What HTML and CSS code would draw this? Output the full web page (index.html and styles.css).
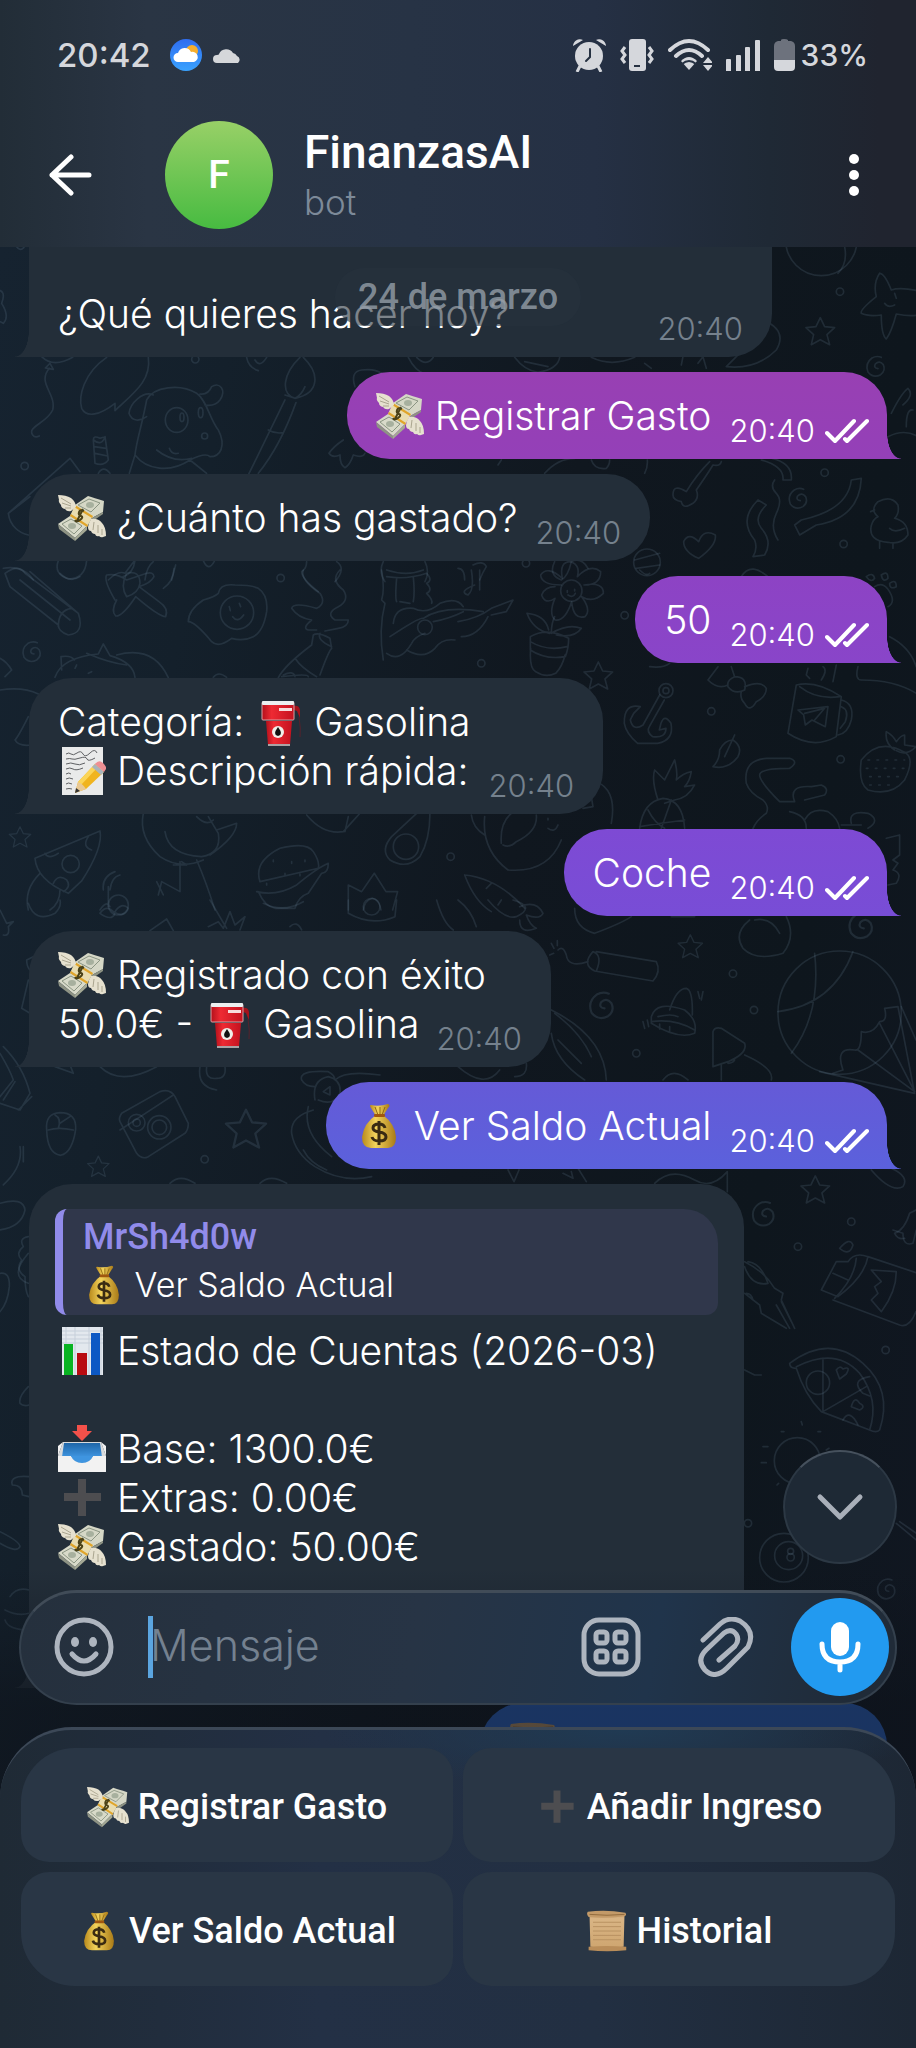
FILE: index.html
```html
<!DOCTYPE html>
<html lang="es">
<head>
<meta charset="utf-8">
<meta name="viewport" content="width=device-width, initial-scale=1">
<title>FinanzasAI</title>
<link rel="stylesheet" href="styles.css">
</head>
<body>
<svg class="defs" aria-hidden="true">
  <defs>
    <linearGradient id="gold" x1="0" x2="1" y1="0" y2="0"><stop offset="0" stop-color="#b98a1c"/><stop offset=".4" stop-color="#f3d35c"/><stop offset="1" stop-color="#a97a17"/></linearGradient>
    <linearGradient id="red" x1="0" x2="1" y1="0" y2="0"><stop offset="0" stop-color="#b3101b"/><stop offset=".3" stop-color="#ee2a33"/><stop offset="1" stop-color="#c4121f"/></linearGradient>
    <linearGradient id="paper" x1="0" x2="0" y1="0" y2="1"><stop offset="0" stop-color="#c9a173"/><stop offset=".15" stop-color="#d9b585"/><stop offset="1" stop-color="#cfa670"/></linearGradient>
    <linearGradient id="sky" x1="0" x2="0" y1="0" y2="1"><stop offset="0" stop-color="#2f6df0"/><stop offset="1" stop-color="#39a2ff"/></linearGradient>
    <linearGradient id="tray" x1="0" x2="0" y1="0" y2="1"><stop offset="0" stop-color="#1f66a8"/><stop offset="1" stop-color="#3f95e0"/></linearGradient>
    <symbol id="e-wings" viewBox="0 0 48 48">
      <path d="M17 11 30 2q6 2 16 5l-1 11-11 6z" fill="#d5d7c6"/><path d="M45 18l-11 6 1 3 10-7z" fill="#8e9384"/>
      <path d="M20 11 31 5l11 4-9 9z" fill="none" stroke="#8b9583" stroke-width="1"/><ellipse cx="32" cy="11" rx="4" ry="3" fill="#a7b09e"/>
      <path d="M0 30 12 22l17 10-12 12z" fill="#d8dac9"/><path d="M0 30l17 14v3L1 35z" fill="#8e9384"/><path d="M17 44 29 32v4L17 47z" fill="#a5a995"/>
      <path d="M4 30l9-5 11 7-8 8z" fill="none" stroke="#8b9583" stroke-width="1"/><ellipse cx="14" cy="32" rx="4" ry="3" fill="#a7b09e"/>
      <path d="M17 11 35 22 29 33 12 22z" fill="#e9ddb0"/><path d="M17 11 35 22l-1 2-18-11zM13 20l17 11-1 2-17-11z" fill="#e0a52b"/>
      <path d="M26 17q-4-2-5 1t2 4-1 4-5 0M25 15l-6 12" fill="none" stroke="#4b4218" stroke-width="2"/>
      <path d="M0 1q8 0 13 3 5 4 5 9l-5 4q-4 1-6-2-4-1-4-4-3-3-2-5z" fill="#e6e1cf"/><path d="M3 4l10 6M4 9l9 3M7 14l6 0" stroke="#aaa58f" stroke-width="1" fill="none"/>
      <path d="M33 25q7-1 11 4 4 4 4 13l-3 1q-2 1-4-1-3 1-4-2-3 0-4-3-3 0-3-4 1-5 3-8z" fill="#e6e1cf"/><path d="M36 28l-1 8M40 31v8M44 35v6" stroke="#aaa58f" stroke-width="1" fill="none"/>
    </symbol>
    <symbol id="e-bag" viewBox="0 0 48 48">
      <path d="M16 3q8 2 17-1 3 1 0 4l-5 8h-7l-5-8q-2-3 0-3z" fill="url(#gold)"/><path d="M20 5l3 8M25 5v8M30 5l-3 8" stroke="#8f6a12" stroke-width="1" fill="none"/>
      <path d="M21 13h7q12 9 13 22 0 11-8 11H16q-9 0-9-11 2-14 14-22z" fill="url(#gold)"/><rect x="19" y="12" width="11" height="3" rx="1" fill="#a0570f"/>
      <path d="M30 26q-1-4-6-4-6 0-6 4 0 3 6 4 7 1 7 5 0 4-7 4-6 0-7-4M24 19v24" fill="none" stroke="#3a2b12" stroke-width="3"/>
    </symbol>
    <symbol id="e-pump" viewBox="0 0 48 48">
      <path d="M39 8q5-1 6 4v8q-2-4-3-7l-3-1" fill="#a3121b"/><path d="M44 19q2 12 1 20" stroke="#56222c" stroke-width="1" fill="none"/>
      <rect x="7" y="4" width="32" height="18" rx="1" fill="url(#red)" stroke="#d8a1a5" stroke-width="1"/><rect x="7" y="3" width="32" height="4" rx="1" fill="#eceff0"/>
      <rect x="24" y="10" width="13" height="3" fill="#f7dcdc"/><path d="M11 23h26l-2 24H13z" fill="url(#red)"/><path d="M13 46h22v2H13z" fill="#a9a3a5"/>
      <circle cx="23" cy="34" r="6" fill="#f0efe9"/><path d="M23 29q6 8 0 9-6-1 0-9z" fill="#111"/>
    </symbol>
    <symbol id="e-memo" viewBox="0 0 48 48">
      <path d="M4 0h41v48H4z" fill="#e9eaea"/><path d="M8 7q3-2 5 0t6-1 6 1 7-1 7 0M8 12q4-1 6 0t8-1 7 1 8-1M8 17q5-2 9 0t10-1M8 22q4-2 7 0t10-1M8 27q3-2 5 0M8 32q3-2 7 0M8 37q2-2 6 0M8 42q3-1 6 0" fill="none" stroke="#5e6063" stroke-width="1"/>
      <path d="M17 46l3-11L37 17l9 8-18 17z" fill="#f0b41f"/><path d="M20 35L37 17l3 3-17 18z" fill="#fbd558"/><path d="M17 46l3-11q5 2 8 7z" fill="#e9c996"/><path d="M17 46l1-5 4 3z" fill="#333"/><path d="M34 20l3-3 9 8-3 3z" fill="#a9b4bb"/><path d="M37 17q4-5 8-1t3 6l-2 3z" fill="#ee8f93"/>
    </symbol>
    <symbol id="e-chart" viewBox="0 0 48 48">
      <path d="M4 0h41v48H4z" fill="#e3e8ee"/><path d="M4 4h41M4 8h41M4 12h41M4 16h41M8 0v48M17 0v48M31 0v48M43 0v48" stroke="#c6cfda" stroke-width="1"/>
      <path d="M6 17h9v31H6z" fill="#09b322"/><path d="M19 26h10v22H19z" fill="#b80b10"/><path d="M33 6h9v42h-9z" fill="#0c58c4"/>
    </symbol>
    <symbol id="e-inbox" viewBox="0 0 48 48">
      <path d="M5 17h38l5 14v16H0V31z" fill="#d9dbdd"/><path d="M6 18h36l2 14H4z" fill="url(#tray)"/>
      <path d="M0 31h13q3 7 11 7t11-7h13v15q0 1-1 1H1q-1 0-1-1z" fill="#f2f2f2"/><path d="M5 17L0 31V21zM43 17l5 14V21z" fill="#f2f2f2"/>
      <path d="M13 31q3 7 11 7t11-7" fill="#3f95e0"/><path d="M19 0h10v6h5L24 16 14 6h5z" fill="#f4514a"/>
    </symbol>
    <symbol id="e-plus" viewBox="0 0 48 48"><path d="M20 5h8v14h15v8H28v15h-8V27H6v-8h14z" fill="#4d4d50"/></symbol>
    <symbol id="e-scroll" viewBox="0 0 48 48">
      <path d="M4 4q18 3 40 1l-1 37q-18 2-38 0z" fill="url(#paper)"/><path d="M2 2q20-3 43 1 2 3-1 4-22 3-41 1-3-3-1-6z" fill="#c39a68"/><path d="M4 5q20 2 40 0" stroke="#8c6638" stroke-width="1" fill="none"/>
      <path d="M3 42q20-2 43 0v4q-22 2-43 0z" fill="#b98d59"/><path d="M8 14h32M8 19h32M8 24h32M8 29h32M8 34h32" stroke="#b58e5e" stroke-width="1"/>
    </symbol>
    <symbol id="checks" viewBox="0 0 44 26"><path d="M2 15l8 8L29 3M20 21l2 2L42 3" fill="none" stroke="currentColor" stroke-width="4" stroke-linecap="round" stroke-linejoin="round"/></symbol>
    <path id="star" d="M0-42 13-15 43-12 20 9 28 39 0 24-27 39-20 9-43-12-13-15Z"/>
    <path id="spiral" d="M2 4q-14-2-8-14 12-12 24 2 8 18-8 30-22 12-38-8-10-26 12-42 14-8 28-2"/>
    <circle id="dot" r="11"/>
  </defs>
</svg>

<div class="screen">
  <header class="top">
    <div class="status">
      <span class="clock">20:42</span>
      <svg class="s-weather" viewBox="0 0 32 32" aria-hidden="true"><circle cx="16" cy="16" r="16" fill="url(#sky)"/><circle cx="22" cy="12" r="6" fill="#f6ae2d"/><path d="M8 23a4 4 0 0 1 0-9 7 7 0 0 1 13-1 5 5 0 0 1 3 10z" fill="#fff"/></svg>
      <svg class="s-cloud" viewBox="0 0 30 17" aria-hidden="true"><path d="M4 16a4 4 0 0 1 0-8q2 0 2-1A8 8 0 0 1 20 6a6 6 0 0 1 4 3 4 4 0 0 1 1 7z" fill="#d5d7da"/></svg>
      <div class="indicators">
        <svg width="33" height="34" viewBox="0 0 33 34" aria-hidden="true"><g fill="#d5d7dc"><circle cx="16" cy="18" r="14"/><path d="M0 8a7 7 0 0 1 10-6zM33 8a7 7 0 0 0-10-6z"/><path d="M7 28l-3 6M25 28l3 6" stroke="#d5d7dc" stroke-width="3"/></g><path d="M17 11v8l-4 4" fill="none" stroke="#263142" stroke-width="2" stroke-linecap="round"/></svg>
        <svg width="34" height="34" viewBox="0 0 34 34" aria-hidden="true"><rect x="9" y="1" width="17" height="32" rx="3" fill="#d5d7dc"/><path d="M14 28h6" stroke="#263142" stroke-width="2"/><path d="M5 9l-3 4 3 4-3 4 3 4M29 9l3 4-3 4 3 4-3 4" fill="none" stroke="#d5d7dc" stroke-width="3"/></svg>
        <svg width="44" height="34" viewBox="0 0 44 34" aria-hidden="true"><g fill="none" stroke="#d5d7dc" stroke-width="4" stroke-linecap="round"><path d="M2 12Q21-6 40 12M8 18q13-12 26 0"/></g><path d="M13 23q8-8 16 0l-8 9z" fill="#d5d7dc"/><path d="M14 26q7-6 14 0" fill="none" stroke="#263142" stroke-width="2"/><path d="M35 25l5-6 5 6zM35 27l5 6 5-6z" fill="#d5d7dc"/></svg>
        <svg width="34" height="34" viewBox="0 0 34 34" aria-hidden="true"><path d="M0 22q0-1 1-1h3q1 0 1 1v11H0zM10 18q0-1 1-1h3q1 0 1 1v15h-5zM19 10q0-1 1-1h3q1 0 1 1v23h-5zM29 3q0-1 1-1h3q1 0 1 1v30h-5z" fill="#d5d7dc"/></svg>
        <span class="battery"><svg width="21" height="34" viewBox="0 0 21 34" aria-hidden="true"><path d="M7 2q0-1 3-1t4 1v1h3q4 1 4 5v15H0V8q0-4 4-5h3z" fill="#6d727d"/><path d="M0 22h21v7q0 4-4 4H4q-4 0-4-4z" fill="#d5d7dc"/></svg><span>33%</span></span>
      </div>
    </div>
    <div class="bar">
      <button class="icon back" aria-label="Atrás"><svg width="44" height="42" viewBox="0 0 44 42"><path d="M41 21H4M23 3 4 21l19 18" fill="none" stroke="#fff" stroke-width="5" stroke-linecap="round" stroke-linejoin="round"/></svg></button>
      <div class="avatar" aria-hidden="true">F</div>
      <div class="who"><h1>FinanzasAI</h1><p>bot</p></div>
      <button class="icon more" aria-label="Más opciones"><svg width="12" height="44" viewBox="0 0 12 44"><g fill="#fff"><circle cx="6" cy="6" r="5"/><circle cx="6" cy="22" r="5"/><circle cx="6" cy="38" r="5"/></g></svg></button>
    </div>
  </header>

  <main class="chat">
    <svg class="doodles" viewBox="0 247 916 1480" preserveAspectRatio="xMidYMin slice" aria-hidden="true">
      <g transform="translate(0 240) scale(.3333)">
        <path d="M-10 150Q20 150 5 190 30 230 10 250L-10 240M50 20q10 15 22 2M125 350Q160 385 218 352M150 370l-14 14 24 4zM148 385C110 430 170 460 158 510 140 550 80 560 98 585q7 10 20 3"/>
        <path d="M320 352C250 400 235 470 245 505c15 30 55 20 100-15v22c55-52 110-90 100-160"/><circle cx="586" cy="358" r="11"/><path d="M740 352q5 30 35 40M765 360q15 25 35-8"/>
        <path d="M440 480C460 440 540 430 590 460c30 20 40 80 65 110 25 50 5 80-25 80-10-10-30-5-60 10-60 40-130 30-165-15C410 600 425 560 440 480M460 465c-30-15-70 25-73 55 8 25 33 25 53 10M600 462q25 3 35-22c25-15 45 10 25 40q-15 20-45 15M470 630q50 40 105 25M508 625q7 20 27 15M405 645l-17 55M570 660l50 40"/>
        <ellipse cx="530" cy="540" rx="34" ry="37"/><ellipse cx="546" cy="532" rx="6" ry="13"/><ellipse cx="602" cy="518" rx="7" ry="15"/><circle cx="614" cy="588" r="9"/>
        <path d="M885 475C840 460 850 400 900 352M910 352C960 400 960 460 885 475l-30-10M855 480 745 705M888 488Q840 620 775 700M805 570q20 12 45 8M885 475q20-10 30-35"/>
        <path d="M90 770 25 820c5 40 35 60 60 65M25 820 210 655l30 40M280 600q25 20 35-10l10 70q-15 20-40 10zM283 620l35 5M285 640l38 8M295 700q15-25 35 0M280 600q0-15 20-5l10-3"/>
        <path d="M1030 600q-30 20-43 40 10 15 33 5 0 30 15 38 15-8 25-38 30 10 35-5M1065 440q-15-45 20-50 40-5 60 10M1225 352q20 40 50 50M1250 352q30 30 50 0"/><use href="#dot" x="74" y="678"/>
        <path d="M175 962q-15 40 30 55 50 0 55-55M325 1020q30-30 50-20l30-40M370 1010q30-10 35-48M435 1020q5-40 25-55M515 1020l12-45M920 965q0 20-15 30 0 20 50 60M1010 965q30 20-5 60M1150 965q-15 30 5 60M1275 965q15 30 0 60M1160 990q60 20 110 0M610 962q15 35 33 2M10 985q60-10 90 35"/>
      </g>
      <g transform="translate(458 240) scale(.3333)">
        <circle cx="1090" cy="0" r="107"/><path d="M1160 20q10 50-20 80M1265 100q15 0 35 50 30-10 90 5M1265 100q-20 30-10 70-50 40-45 50 20 10 60 5 0 60 15 72 15-20 30-75 50 10 75 0M1280 190q10 15 30 5M1310 160l5 15"/>
        <use href="#star" x="1087" y="275"/><use href="#spiral" x="1258" y="382"/><use href="#spiral" x="1025" y="778"/><use href="#dot" x="1146" y="155"/><use href="#dot" x="1100" y="698"/><use href="#dot" x="1157" y="912"/><use href="#dot" x="204" y="970"/>
        <path d="M805 380q60-60 130-130 50 30 20 80-60 60-150 50M170 352q30 40 70 45 60-10 65-45M200 365l70 15M400 352q60 30 130 0M560 370l20 15M670 375l5-25M720 370l15-20 10 35"/>
        <path d="M1300 520q30-60 50-75 20 20-15 50M1345 560q0-55 20-50M1290 590q50-25 90 0M755 665q-40 40-70 90-40-25-40 10 0 15 25 20 5 25 35 5 20-15 10-40 35-50 50-75 20 5 25-10M260 700q40-45 90-45M560 700q10-20 8-40M400 660q10 30 45 25 10-10 10-25M120 675l10-15M910 660q70 20 65 60h25q5-50-60-65"/>
        <path d="M900 780q-60 60-10 120 10 25-5 50l35-5q25-40-10-80-25-30 15-70zM950 720q-15 20 5 40t0 60 5 80M1180 720q-10 90-150 120l-20 15 15 30 50-30q130-20 135-140z"/>
        <path d="M722 955q-45-20-45-50 15-30 45 0 15-40 50-20 5 30-50 70zM1260 830q-25-20 0-45 40-20 60 10 5 25-10 40 40 10 40 50-20 30-60 22-60-5-50-50 5-20 20-27M1265 905v20M1305 910v15M1250 810l-12 5M1295 865q15 15 45 0"/>
        <circle cx="567" cy="967" r="40"/><path d="M530 960l75-20M535 985l70-10M290 965q-20 40 20 55 20-10 30-55 30-15 50 20M45 975q30-15 40 5-10 15-20 40M0 985q20 0 20 35M850 1010q30-50 90 10"/>
      </g>
      <g transform="translate(0 570) scale(.3333)">
        <path d="M15 10q40-30 60 0L235 130Q255 190 205 195 175 185 175 165L30 50zM60 30 210 150M90 5 235 130M215 115q-40 5-40 55M0 360q70-10 115 12M85 440q-30 60-40 70 10 20 50 15M0 265q20 10 35 35l-20 20"/>
        <path d="M345 90Q310 30 320 15q30-5 60 15l60-20q20-5 22 10-10 20-45 30l60 45q30 20 20 45-20 0-90-60-40 60-60 58-15-15 3-48M380 80q-20-30 0-70 40-10 40 30-5 30-40 40M490 55q30-20 32-60M180 10q30 30 60 10"/>
        <path d="M655 70q5-30 50-25 50 0 70 10 30 20 25 70-10 60-40 75-30 15-65 5-40 30-60 10-50-60-70-60 0-35 45-65 35-10 45-20z"/><circle cx="711" cy="128" r="50"/><path d="M688 110l3 12M718 100l4 10M698 140q15 20 33-5"/>
        <path d="M910 0q-10 30 50 70 20 30-10 45-70-20-75 0 20 30 60 35-30 25-10 30h25M1020 0q-30 30 10 60 20 30-15 50-40 20-10 40h40q0 20-30 25l-40 8M940 195q15-10 50 10l5 30q-10 10-35 80M940 195l-5 30q-80 60-100 98M960 190q-10 20 35 40M885 265q20 30 65 55M850 315q30-15 35 5M845 320q80-10 80 0"/>
        <path d="M1145 0q10 60 0 90l10 10q-20 80-5 170M1160 20q60 10 120-10 20 20 0 30 20 20 0 30 20 20 15 30M1190 25q-5 60 0 70M1240 20q5 50 0 75M1200 95l30 5M1170 200q90-60 100-55 60-40 180-20M1300 155q50-10 90-30M1180 160q5-50 60-45 40 20 80-15 50-20 70 10M1160 250q40 30 75-30 10-20 40-30M1220 240q50 30 85-5 20-30 60-25"/><circle cx="1275" cy="172" r="22"/>
        <use href="#dot" x="842" y="24"/><use href="#spiral" x="100" y="248"/>
        <path d="M165 322q20-60 130-70l15-30 20 35q70 20 75 65M185 300l-2-40q30-5 40 10M350 255q110-30 155 68M230 285l-5 10M265 310l10-5M260 250q70 30 120 35M640 322q15-20 40 0"/>
        <use href="#star" transform="translate(60 802) scale(.75)"/>
        <path d="M105 865 300 783q10 50-55 150l-40 37Q110 930 105 865M135 850q10 20 40 0M265 800q-20 30 10 40M160 940q15-30 40-10 15 20-10 35M120 910q-50 50-35 110M180 960q0 40-30 60"/><circle cx="212" cy="882" r="26"/>
        <path d="M430 730q-15 70 50 130 60 40 130 10M495 785q10 70 110 75 60-10 50-70l-30-50M590 740q30 30 50 10M650 780l60-20q0 40-80 95M540 875v90l-55-30M590 870q30 70 55 150M470 935l20 40M485 935l-10 40M520 885h40l-15-10"/>
        <path d="M780 935q-20-60 60-100 80-20 100 10 20 30 15 50zM770 965q60 15 120-20 60-50 95-65 0 30-20 30l-40 60q-30 10-40 45h-60q-30-5-50-50zM820 870v5M875 875v5M855 910v5M900 912v5M800 940v5M915 870v5"/>
        <path d="M920 735q50 60 110 50l50-55M1035 785l10-45M1290 730q0 80-30 130-40 40-90 10-30-30 5-70l75-70"/><circle cx="1218" cy="830" r="38"/><use href="#dot" x="1352" y="860"/>
        <path d="M1045 1020V945l40 20 38-55 35 55h35l-15 55M1090 1020q5-30 28-35 20 5 25 35M310 960q-5-40 35-55M330 960q5-40 30-45M325 950v60M300 1020q20-30 30-10"/><circle cx="355" cy="1005" r="30"/>
      </g>
      <g transform="translate(458 570) scale(.3333)">
        <circle cx="340" cy="62" r="32"/><path d="M310 45q-60 0-62-30 20-30 65 10-10-50 25-50 30 10 20 45 40-40 70-15 0 40-50 40 60-10 58 25-30 30-65 10 30 40 10 60-35 10-40-45-20 60-50 55-20-20 0-65-30 20-40-10 10-25 40-25M328 62v5M350 58v5M330 75q15 10 22-5"/>
        <path d="M280 190q0-30 10-50M275 190q-50-10-68-60 55 5 65 50M280 190q50-30 90-15-20 30-75 20M217 200q50-30 115 5 0 30-10 55-60 10-105-20zM217 215q50 30 110 15M218 235q-5 60 15 70 30 20 60 5 20-20 28-55M40 0q10 60-10 75-30-10 20-30M65 0l0 60M0 155q60-10 100-40l65-25-20 35-45 10M10 200q50 0 80-60"/>
        <use href="#dot" x="500" y="136"/><use href="#dot" x="70" y="280"/><use href="#dot" x="760" y="424"/><use href="#dot" x="1148" y="568"/><use href="#star" x="421" y="318"/>
        <circle cx="624" cy="362" r="21"/><circle cx="624" cy="362" r="9"/><path d="M605 375l-50 90q-30 20-38-15l10-20 20-20q-50-10-48 50 5 30 40 60h60q50-10 40-60-20-30-30 0l-5 20 20-5q0 30-40 25-20-15-10-30l45-80"/>
        <path d="M780 290q-30 40-30 40 30 30 60 15M820 290l10 30q40 0 30 40-30 15-50-10-5-20 20-30M860 350q50-20 65 5 0 25-30 40-20 35-35 5-15-15-10-35M545 0q20 20 30 10M575 290q40 5 60-10"/>
        <path d="M1015 345q60-15 135 35l-15 120q-70 40-145-10zM1025 350q50 40 120 30M1150 390q40 10 30 60-10 40-40 45M1150 410q25 10 12 45l-15 20M1020 420l90-10-8 60-40-20-20 15-5-30zM1040 430l60-15-30 35M1050 295l-5 20 10 10M1095 290q15 10-5 40M1135 285l-10 50"/>
        <path d="M1225 20q20-15 25 5-10 15-25-5M1270 15q20-15 20 10-15 15-20-10M1295 40q20-15 20 10-20 10-20-10M1250 50q30-20 50 25 10 25-10 35M1295 200q60 30 80 90M1200 290q-10 40 10 40 100 0 165 40"/>
        <path d="M765 590q20-20 20-50 15-30 40-30 30 20 15 50-30 40-75 30zM800 560l30-65M865 640q-10-70 60-75h70q30 10 0 30-90 0-90 20 0 20 60 80h45q-20-50 50-45l30-5q25 10 10 30l-60 15M865 640q10 30 50 50 20 20 10 40-30 20-40 46M995 725q50 10 50 50M1040 750q20-40 70-25 30 20 35 50M1150 765h60M1180 760q-10-40 50-30 40 20 0 45"/>
        <path d="M1210 570q-10 70 20 90 70 20 110-30 30-60 5-80-80-50-135 20M1310 540q-30-20-25-55 20 10 30 30 15-20 25-20v30l35 5q-30 30-60 12"/><g stroke-dasharray="5 22"><path d="M1230 570h110M1225 595h120M1235 620h100M1235 645h70"/></g>
        <path d="M545 775q10-80 70-90 60 5 65 90M545 770q60-10 135-20M570 720q20 40 50 55M640 690l-30 85M600 690q-20-60-10-90 20 20 30 30l30-60q10 40 5 60 20-20 45-25-5 30-20 45l30-5q-20 40-60 45l-30 10"/>
        <path d="M130 820q-5-60 30-90M235 735q5 50-60 80-20 20-40 10M80 740q-10 100 70 160 120 10 160-90M400 630q80 20 60 130M375 715l30-5-5-30M40 735q5 40 40 60M270 745v5M270 775q20 15 30-10M20 915q30 80 80 110M20 915q100 10 180 100M100 940l-15 15M130 990l-10 15M1285 805l40-10v60l-20 15 15 10-15 20q30 10 10 40l-25 5"/>
      </g>
      <g transform="translate(0 900) scale(.3333)">
        <path d="M10 440q60 60 80 140l-30 50-60-20M0 460q30 50 40 80l-40 50M45 545l-35 55M95 590l-40 40M0 30l20 40 20-5-15 15q5 30-15 25M85 10q20 60 80 30 20-20 15-40M300 40q20-30 45 0-10 25-45 0M345 35q20-30 40-10-10 30-45 10M450 92l50-35 20 35M630 0l50 85M625 80l30-15 15 20 20-50 15 40 30-25-15 40M790 10q60 30 120-5M870 80q20-20 35 10M1045 0v40q70 40 140 10l5-50M1310 0q20 70 50 90"/><circle cx="1115" cy="20" r="25"/>
        <path d="M140 690q-5-50 40-52 50 0 47 50-10 70-45 78-40-5-42-76zM145 690q30-10 75 0M165 645q20 10 10 40M210 650l-30 20M300 500q60 60 170 0M165 500l55 20-8-20M600 500q-10 60 50 70M620 500q-5 40 30 35 30 0 25-35"/>
        <path d="M365 640 480 575q30-10 45 15l40 80q0 20-10 30l-110 70q-20 10-35-10l-50-95q-5-10 5-25zM360 690l130-85 30-20"/><circle cx="478" cy="682" r="35"/><circle cx="478" cy="682" r="22"/><circle cx="410" cy="668" r="25"/><circle cx="410" cy="668" r="11"/>
        <use href="#star" transform="translate(738 688) scale(1.4)"/><use href="#star" transform="translate(295 800) scale(.75)"/><use href="#dot" x="614" y="778"/>
        <path d="M905 540q-10-30 80-25 20 10 20 25 30-30 135-15M905 540q10 20 40 20M945 600q-10-60 40-70 40 10 35 50-20 40-65 20M970 575l20-15v25zM940 630q-70 20-65 70 10 60 70 100 80 50 170 30M910 750q20 40 70 60M925 620q-20 80 70 150M0 910q70-20 75 20-10 50-75 60M510 850q30-30 75 0M780 850q30-30 80 0M60 740q10 60-50 115M70 740v45M100 170l-20 10q0 20 10 30M85 240l-20 85 25 15M85 1150q-60-20 0-90"/>
      </g>
      <g transform="translate(458 900) scale(.3333)">
        <path d="M0 0q40 30 55 80M90 0q50 60 85 50 60-30-10-50M185 20q50-20 70 20-10 20-50 5 10 30 30 40-50 20-50-25M350 25q0 60 60 75 80-30 110-50M640 50l70 0"/><path d="M875 60q-50 40-20 85 40 40 120 15 40-50 10-110M890 60q50-10 75 40"/>
        <use href="#star" transform="translate(697 140) scale(.85)"/><use href="#spiral" transform="translate(1215 80) scale(1.3)"/><use href="#spiral" transform="translate(437 320) scale(1.3)"/><use href="#spiral" transform="translate(922 945) scale(1.2)"/><use href="#dot" x="825" y="221"/><use href="#dot" x="888" y="330"/><use href="#dot" x="535" y="460"/><use href="#dot" x="1180" y="965"/><use href="#star" x="1072" y="870"/>
        <path d="M415 155l180 30q15 30-10 58l-175-30q-40-20-5-58 30 10 10 58M390 185q-60 20-65-20-10-30-25-15M280 130l8 15M298 122v15M275 165l12-5"/>
        <path d="M635 330q20-65 50-65 20 5 18 80M580 350q15-50 100-20 40 30 30 70-50 20-130-30zM580 365q70-10 130 25M600 350q40-10 60 0M605 372v15M635 380v15M555 365l5 20M568 360l4 20M720 275l5 20M735 275l-5 25"/>
        <path d="M765 395q5-15 25-10l70 45q10 30-50 55l-45 15zM790 495v45M810 490q15 0 20-10M860 465q90 40 80 75M615 540q30-40 75 0"/>
        <circle cx="1145" cy="338" r="185"/><path d="M1070 160q20 180-70 300M1185 155q-60 160-225 180M1085 515l285 65-50-260-40 5q10 40-15 40-20 40-55 30 0 60-20 55-60-10-35 60l-30 10M1200 450l170 125M1265 370l105 205M1330 320l44 100"/>
        <path d="M280 330q160 80 165 210M280 400q10 80 100 140M290 340q80 60 110 130M300 420l70 70M0 500q80 70 125 10M170 530q40 0 35-40"/>
        <path d="M150 810l18 35 15-35M315 820l30 15-5-20M360 805l25 40M590 850q50-50 120-10 50 30 98-25v60M1240 810q60 70 95 50 20-30-35-55M1310 1000q30-10 45-60l19-10M1310 1000q10 20 30 15"/>
      </g>
      <g transform="translate(458 1230) scale(.3333)">
        <use href="#dot" x="1020" y="50"/><use href="#dot" x="1283" y="360"/><use href="#dot" x="870" y="880"/><path d="M1305 0l30 10q0 40 30 30l10-40"/>
        <path d="M860 95q60 30 90 80l25 15-5 20 40 85M860 110q20 60 70 50-20-60-60-65M860 190l45 35 5 25 75 45M955 225l40 70M970 215l30 60M865 190q15 0 20 20"/>
        <path d="M1135 95l-45 85 50 20q80-60 90-120-40-15-60 15zM1145 55q30-35 40-10-10 35-40 10M1130 205q60-60 65-120M1230 80l144 48M1125 210l200 75q30 10 49-40M1125 130l45 20M1240 120l75 5q0 60-45 120l-30-35 20-20-10-20 20-15z"/>
        <path d="M995 400q120-90 220 0 90 80 50 200-10 10-30 0l-145-55q-50-50-75-130-20 0-20-15M1015 410q120-60 190 20 60 80 30 170M1095 385v160l130-75"/><circle cx="1080" cy="458" r="35"/><path d="M1135 420q10-15 20-3 25-10 10 15l-20 15zM1180 530q10-35 25-10 20 10 0 20zM1235 440q-60 10-20 50l20 8M1155 570q20-35 45 15"/>
        <circle cx="1018" cy="692" r="69"/><path d="M1030 575l3 10M970 605h8M1080 605h8M915 650h15M910 698h15M1105 660l8-5M957 765l5-5"/><circle cx="978" cy="983" r="73"/><circle cx="992" cy="977" r="42"/><circle cx="998" cy="964" r="9"/><circle cx="998" cy="982" r="11"/><path d="M1315 880l60 50M1325 875l50 35M860 420l30 15h20"/><use href="#spiral" x="1290" y="1080"/>
      </g>
      <g transform="translate(0 1230) scale(.3333)">
        <path d="M0 130q30-5 28 40-5 50-28 75M85 20q-30 5-15 30-25 20-5 40-20 30 10 50 0 40 10 60M85 470q-30 30-25 50 10 10 27 5M87 740q-60-5-50 25 30 0 30 30l20 5M0 905q60 30 60 45-10 20-60-10M30 1100q20-30 57-20M15 1140q40 20 72 10M15 1170q10 30 72 30"/>
      </g>
    </svg>

    <div class="date">24 de marzo</div>

    <article class="msg in cut"><p>¿Qué quieres hacer hoy?</p><time>20:40</time></article>
    <article class="msg out c1"><p><svg class="emoji"><use href="#e-wings"/></svg> Registrar Gasto</p><time>20:40 <svg class="checks"><use href="#checks"/></svg></time></article>
    <article class="msg in"><p><svg class="emoji"><use href="#e-wings"/></svg> ¿Cuánto has gastado?</p><time>20:40</time></article>
    <article class="msg out c2"><p>50</p><time>20:40 <svg class="checks"><use href="#checks"/></svg></time></article>
    <article class="msg in"><p>Categoría: <svg class="emoji"><use href="#e-pump"/></svg> Gasolina<br><svg class="emoji"><use href="#e-memo"/></svg> Descripción rápida:</p><time>20:40</time></article>
    <article class="msg out c3"><p>Coche</p><time>20:40 <svg class="checks"><use href="#checks"/></svg></time></article>
    <article class="msg in tuck"><p><svg class="emoji"><use href="#e-wings"/></svg> Registrado con éxito<br>50.0€ - <svg class="emoji"><use href="#e-pump"/></svg> Gasolina</p><time>20:40</time></article>
    <article class="msg out c4"><p><svg class="emoji"><use href="#e-bag"/></svg> Ver Saldo Actual</p><time>20:40 <svg class="checks"><use href="#checks"/></svg></time></article>
    <article class="msg in report">
      <blockquote class="quote"><strong>MrSh4d0w</strong><span><svg class="emoji small"><use href="#e-bag"/></svg> Ver Saldo Actual</span></blockquote>
      <p><svg class="emoji"><use href="#e-chart"/></svg> Estado de Cuentas (2026-03)<br><br><svg class="emoji"><use href="#e-inbox"/></svg> Base: 1300.0€<br><svg class="emoji"><use href="#e-plus"/></svg> Extras: 0.00€<br><svg class="emoji"><use href="#e-wings"/></svg> Gastado: 50.00€</p>
    </article>
    <article class="msg out c5"><svg class="emoji"><use href="#e-scroll"/></svg></article>
  </main>

  <footer class="dock">
    <button class="down" aria-label="Ir al final"><svg width="48" height="28" viewBox="0 0 48 28"><path d="M4 4l20 20L44 4" fill="none" stroke="#a9afb9" stroke-width="5" stroke-linecap="round" stroke-linejoin="round"/></svg></button>
    <form class="composer">
      <button type="button" class="icon" aria-label="Emoji"><svg width="60" height="60" viewBox="0 0 60 60"><g fill="none" stroke="#aeb5bf" stroke-width="5" stroke-linecap="round"><circle cx="30" cy="30" r="27"/><path d="M18 37q12 14 24 0"/></g><g fill="#aeb5bf"><ellipse cx="21" cy="25" rx="4" ry="5"/><ellipse cx="39" cy="25" rx="4" ry="5"/></g></svg></button>
      <span class="caret"></span>
      <input type="text" placeholder="Mensaje" aria-label="Mensaje">
      <button type="button" class="icon" aria-label="Comandos"><svg width="60" height="60" viewBox="0 0 60 60"><g fill="none" stroke="#aeb5bf" stroke-width="5"><rect x="3" y="3" width="54" height="54" rx="15"/><rect x="15" y="15" width="11" height="11" rx="3"/><rect x="34" y="15" width="11" height="11" rx="3"/><rect x="15" y="34" width="11" height="11" rx="3"/><rect x="34" y="34" width="11" height="11" rx="3"/></g></svg></button>
      <button type="button" class="icon clip" aria-label="Adjuntar"><svg width="56" height="60" viewBox="0 0 56 60"><path d="M5 23 22 7Q31-1 42 4q16 10 8 26L29 51q-12 12-22 2Q-2 43 8 33l18-17q7-5 12 1 4 6-1 12L21 43" fill="none" stroke="#aeb5bf" stroke-width="5" stroke-linecap="round" stroke-linejoin="round"/></svg></button>
      <button type="button" class="mic" aria-label="Mensaje de voz"><svg width="44" height="52" viewBox="0 0 44 52"><rect x="13" y="1" width="18" height="34" rx="9" fill="#fff"/><path d="M4 23q0 18 18 18t18-18M22 41v8" fill="none" stroke="#fff" stroke-width="5" stroke-linecap="round"/></svg></button>
    </form>
    <div class="keys">
      <button><svg class="emoji small"><use href="#e-wings"/></svg> Registrar Gasto</button>
      <button><svg class="emoji small"><use href="#e-plus"/></svg> Añadir Ingreso</button>
      <button><svg class="emoji small"><use href="#e-bag"/></svg> Ver Saldo Actual</button>
      <button><svg class="emoji small"><use href="#e-scroll"/></svg> Historial</button>
    </div>
  </footer>
</div>
</body>
</html>
```

FILE: styles.css
```css
* { box-sizing: border-box; }
body { margin: 0; background: #0e141c; color: #fff; font-family: Inter, "Noto Sans", sans-serif; font-weight: 350; }
h1, p, blockquote { margin: 0; }
button { border: 0; margin: 0; padding: 0; background: none; color: inherit; font: inherit; }
.defs { position: absolute; width: 0; height: 0; }
.screen { position: relative; display: flex; flex-direction: column; height: 100vh; overflow: hidden; }

/* Header */
.top { display: flex; flex-direction: column; gap: 32px; padding: 32px 54px 10px 48px; background: linear-gradient(90deg, #222d37 0%, #2a3544 16%, #273345 45%, #253044 65%, #1f2935 84%, #20242f 96%); }
.status { display: flex; align-items: center; height: 46px; padding: 0 0 0 9px; color: #d5d7dc; font-weight: 500; }
.status svg { display: block; flex: none; }
.clock { font-size: 33px; line-height: 46px; }
.s-weather { width: 32px; height: 32px; margin-left: 19px; }
.s-cloud { width: 30px; height: 17px; margin-left: 11px; }
.indicators { display: flex; align-items: center; gap: 14px; margin-left: auto; margin-right: -6px; }
.battery { display: flex; align-items: center; gap: 6px; font-size: 30px; font-weight: 500; }
.bar { display: flex; align-items: center; height: 127px; padding-top: 3px; }
.icon { display: block; flex: none; }
.icon svg, .down svg, .mic svg { display: block; }
.avatar { display: flex; flex: none; align-items: center; justify-content: center; width: 108px; height: 108px; margin-left: 73px; border-radius: 50%; background: linear-gradient(#98d067, #47bb41); font: 500 39px/1 Roboto, sans-serif; }
.who { flex: 1; margin-left: 31px; }
.who h1 { font: 500 46px/54px Roboto, sans-serif; }
.who p { color: #7d8a99; font-size: 35px; line-height: 46px; }
.more { margin-right: 2px; }

/* Conversation */
.chat { position: relative; flex: 1; display: flex; flex-direction: column; align-items: flex-start; gap: 15px; min-height: 0; padding: 0 29px; overflow: hidden; background: linear-gradient(100deg, #162330 0%, #14202b 20%, #10171f 50%, #0e161d 75%, #111722 100%); }
.doodles { position: absolute; inset: 0; width: 100%; fill: none; stroke: #7390a8; stroke-opacity: .18; stroke-width: 5; stroke-linejoin: round; stroke-linecap: round; }
.date { position: absolute; z-index: 2; top: 21px; left: 50%; transform: translateX(-50%); padding: 0 23px; border-radius: 30px; background: rgba(38, 50, 62, .6); color: rgba(150, 160, 170, .8); font: 500 36px/58px Roboto, sans-serif; white-space: nowrap; }
.msg { position: relative; z-index: 1; flex: none; display: flex; align-items: flex-end; gap: 18px; padding: 19px 29px 10px; border-radius: 43px; font-size: 39px; line-height: 49px; white-space: nowrap; }
.msg p { padding-bottom: 9px; }
.msg time { display: flex; align-items: center; gap: 10px; margin-left: auto; font-size: 31px; line-height: 36px; }
.msg::after { content: ""; position: absolute; bottom: 0; width: 14px; height: 26px; }
.in { --fill: #232e39; background: var(--fill); border-bottom-left-radius: 0; }
.in time { color: #75818d; }
.in::after { right: 100%; background: radial-gradient(14px 26px at 0 0, transparent 97%, var(--fill) 100%); }
.out { align-self: flex-end; padding-right: 18px; background: linear-gradient(var(--from), var(--fill)); border-bottom-right-radius: 0; }
.out::after { left: 100%; background: radial-gradient(14px 26px at 100% 0, transparent 97%, var(--fill) 100%); }
.c1 { --from: #9840b3; --fill: #9440b8; }
.c2 { --from: #8d43c4; --fill: #8945c9; }
.c3 { --from: #7e4ad4; --fill: #784dd6; }
.c4 { --from: #655ad7; --fill: #5b61dc; }
.c5 { --from: #2d67cc; --fill: #2d67cc; align-items: flex-start; width: 407px; height: 87px; }
.cut { min-width: 743px; padding-top: 42px; border-top-left-radius: 0; border-top-right-radius: 0; }
/* The time shares the short last line instead of widening the bubble */
.tuck { display: grid; min-width: 522px; }
.tuck > * { grid-area: 1 / 1; }
.report { flex-direction: column; align-items: stretch; gap: 11px; min-width: 715px; padding: 25px 26px 108px; }
.report p { padding-left: 3px; }
.quote { display: flex; flex-direction: column; padding: 5px 20px 7px; border-left: 8px solid #918bea; border-radius: 12px 34px 12px 12px; background: #30374b; font-size: 34px; line-height: 47px; }
.quote strong { color: #918bea; font: 500 36px/47px Roboto, sans-serif; }
.emoji { width: 48px; height: 48px; vertical-align: -10px; }
.emoji.small { width: 42px; height: 42px; vertical-align: -9px; }
.checks { width: 44px; height: 26px; }

/* Composer and reply keyboard, floating over the conversation */
.dock { position: absolute; z-index: 3; right: 0; bottom: 0; left: 0; display: flex; flex-direction: column; }
.dock::before { content: ""; position: absolute; z-index: -1; right: 0; bottom: 0; left: 0; height: 480px; background: linear-gradient(rgba(13, 18, 26, 0), rgba(13, 18, 26, .6) 140px); }
.down { display: flex; align-items: center; justify-content: center; align-self: flex-end; width: 114px; height: 114px; margin: 0 19px 26px; border: 2px solid #2c3844; border-top-color: #46515d; border-radius: 50%; background: #1e2935; }
.composer { display: flex; align-items: center; height: 115px; margin: 0 19px 22px; padding: 0 6px 2px 33px; border: 2px solid #34404d; border-top: 3px solid #414c58; border-radius: 58px; background: linear-gradient(100deg, #25303d, #273445 45%, #20344b 72%, #202b38 95%); }
.caret { flex: none; width: 5px; height: 62px; margin: 0 -3px 0 34px; background: #5ba5e0; }
.composer input { flex: 1; min-width: 0; padding: 0 0 4px; border: 0; outline: 0; background: none; color: #fff; font: 300 43px/54px Inter, sans-serif; }
.composer input::placeholder { color: #748190; opacity: 1; }
.clip { margin: 0 37px 0 57px; }
.mic { display: flex; flex: none; align-items: center; justify-content: center; width: 98px; height: 98px; border-radius: 50%; background: #229af0; }
.keys { display: grid; grid-template-columns: 1fr 1fr; gap: 10px; padding: 18px 21px 62px; border-top: 3px solid #3c4857; border-radius: 72px 72px 0 0; background: radial-gradient(300px 60px at 68% 0, #203a53, rgba(32, 58, 83, 0)), linear-gradient(90deg, #1f2a35, #233045 35%, #222f42 65%, #1d2734); }
.keys button { height: 114px; padding-top: 3px; border-radius: 28px; background: #293645; font: 500 36px/48px Roboto, sans-serif; }
.keys button:nth-child(1) { border-top-left-radius: 54px; }
.keys button:nth-child(2) { border-top-right-radius: 54px; }
.keys button:nth-child(3) { border-bottom-left-radius: 54px; }
.keys button:nth-child(4) { border-bottom-right-radius: 54px; }
```
